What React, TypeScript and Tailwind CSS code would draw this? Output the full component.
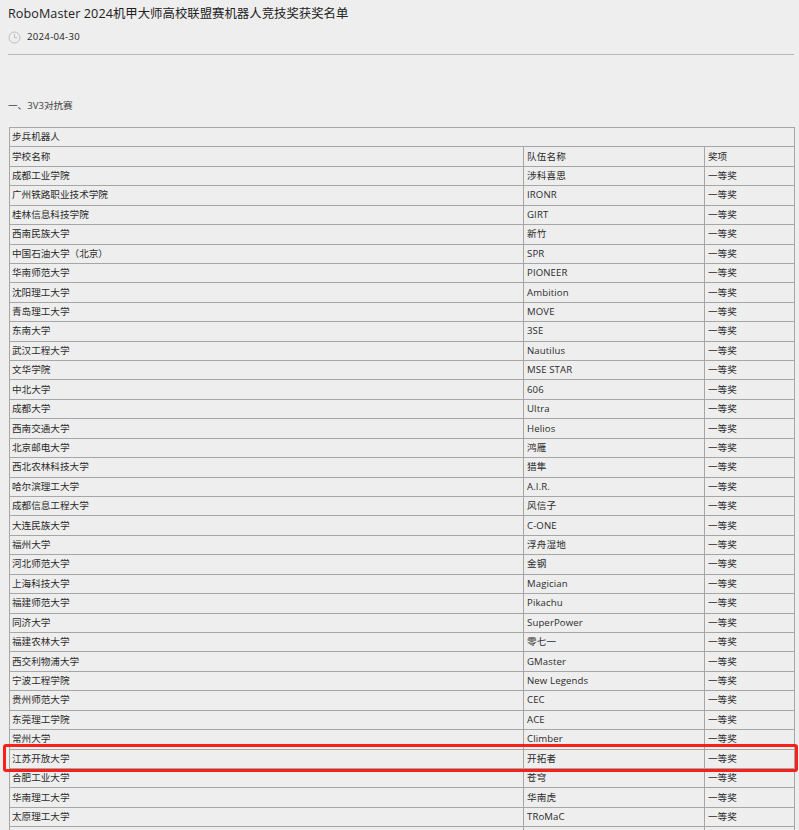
const rows = [
  ['成都工业学院', '涉科喜思'],
  ['广州铁路职业技术学院', 'IRONR'],
  ['桂林信息科技学院', 'GIRT'],
  ['西南民族大学', '新竹'],
  ['中国石油大学（北京）', 'SPR'],
  ['华南师范大学', 'PIONEER'],
  ['沈阳理工大学', 'Ambition'],
  ['青岛理工大学', 'MOVE'],
  ['东南大学', '3SE'],
  ['武汉工程大学', 'Nautilus'],
  ['文华学院', 'MSE STAR'],
  ['中北大学', '606'],
  ['成都大学', 'Ultra'],
  ['西南交通大学', 'Helios'],
  ['北京邮电大学', '鸿雁'],
  ['西北农林科技大学', '猎隼'],
  ['哈尔滨理工大学', 'A.I.R.'],
  ['成都信息工程大学', '风信子'],
  ['大连民族大学', 'C-ONE'],
  ['福州大学', '浮舟湿地'],
  ['河北师范大学', '金钢'],
  ['上海科技大学', 'Magician'],
  ['福建师范大学', 'Pikachu'],
  ['同济大学', 'SuperPower'],
  ['福建农林大学', '零七一'],
  ['西交利物浦大学', 'GMaster'],
  ['宁波工程学院', 'New Legends'],
  ['贵州师范大学', 'CEC'],
  ['东莞理工学院', 'ACE'],
  ['常州大学', 'Climber'],
  ['江苏开放大学', '开拓者'],
  ['合肥工业大学', '苍穹'],
  ['华南理工大学', '华南虎'],
  ['太原理工大学', 'TRoMaC'],
]

const cell = 'border border-[#a6a6a6] pr-0 py-0 font-normal text-left align-middle overflow-hidden whitespace-nowrap'
const firstCol = cell + ' pl-[2px]'
const teamCol = cell + ' pl-[3px] tracking-[0.12px]'
const prizeCol = cell + ' pl-[3px]'

function ClockIcon() {
  return (
    <svg width="13" height="13" viewBox="0 0 13 13" fill="none" stroke="#bdbdbd" strokeWidth="1" className="shrink-0">
      <circle cx="6.5" cy="6.5" r="5.5" />
      <path d="M6.5 3v3.8h2.8" />
    </svg>
  )
}

export default function App() {
  return (
    <div className="relative h-[830px] w-[799px] overflow-hidden bg-[#eeeeee] font-['Open_Sans','Noto_Sans_CJK_SC',sans-serif] text-[#2b2b2b]">
      <div className="pl-2 pr-[5px] pt-[5px]">
        <h1 className="text-[12.4px] leading-[18px] font-normal text-[#222222]">
          <span className="text-[12.6px] tracking-[0.08px]">RoboMaster 2024</span>
          机甲大师高校联盟赛机器人竞技奖获奖名单
        </h1>
        <div className="mt-[6px] flex h-[17px] items-center gap-[6px] text-[9.6px] tracking-[0.3px] text-[#222222]">
          <ClockIcon />
          <span>2024-04-30</span>
        </div>
        <div className="mt-[8px] border-b border-[#b5b5b5]" />
        <p className="mt-[44px] h-[14px] text-[9.6px] leading-[14px] text-[#444444]">一、3V3对抗赛</p>
        <table className="mt-[14px] ml-px w-[785px] table-fixed border-collapse text-[9.6px] leading-[12px]">
          <colgroup>
            <col className="w-[514px]" />
            <col className="w-[181px]" />
            <col className="w-[90px]" />
          </colgroup>
          <thead>
            <tr className="h-[19.43px]">
              <th colSpan={3} className={firstCol}>步兵机器人</th>
            </tr>
            <tr className="h-[19.43px]">
              <th className={firstCol}>学校名称</th>
              <th className={teamCol}>队伍名称</th>
              <th className={prizeCol}>奖项</th>
            </tr>
          </thead>
          <tbody>
            {rows.map(([school, team]) => (
              <tr key={school} className="h-[19.43px]">
                <td className={firstCol}>{school}</td>
                <td className={teamCol}>{team}</td>
                <td className={prizeCol}>一等奖</td>
              </tr>
            ))}
            {/* next row is cut off by the bottom of the screenshot */}
            <tr className="h-[19.43px]">
              <td className={firstCol} />
              <td className={teamCol} />
              <td className={prizeCol} />
            </tr>
          </tbody>
        </table>
      </div>
      {/* red annotation drawn over the screenshot */}
      <div className="absolute left-[3px] top-[744px] h-[28px] w-[795px] rounded-[3px] border-[3.5px] border-[#f8201a]" />
    </div>
  )
}
